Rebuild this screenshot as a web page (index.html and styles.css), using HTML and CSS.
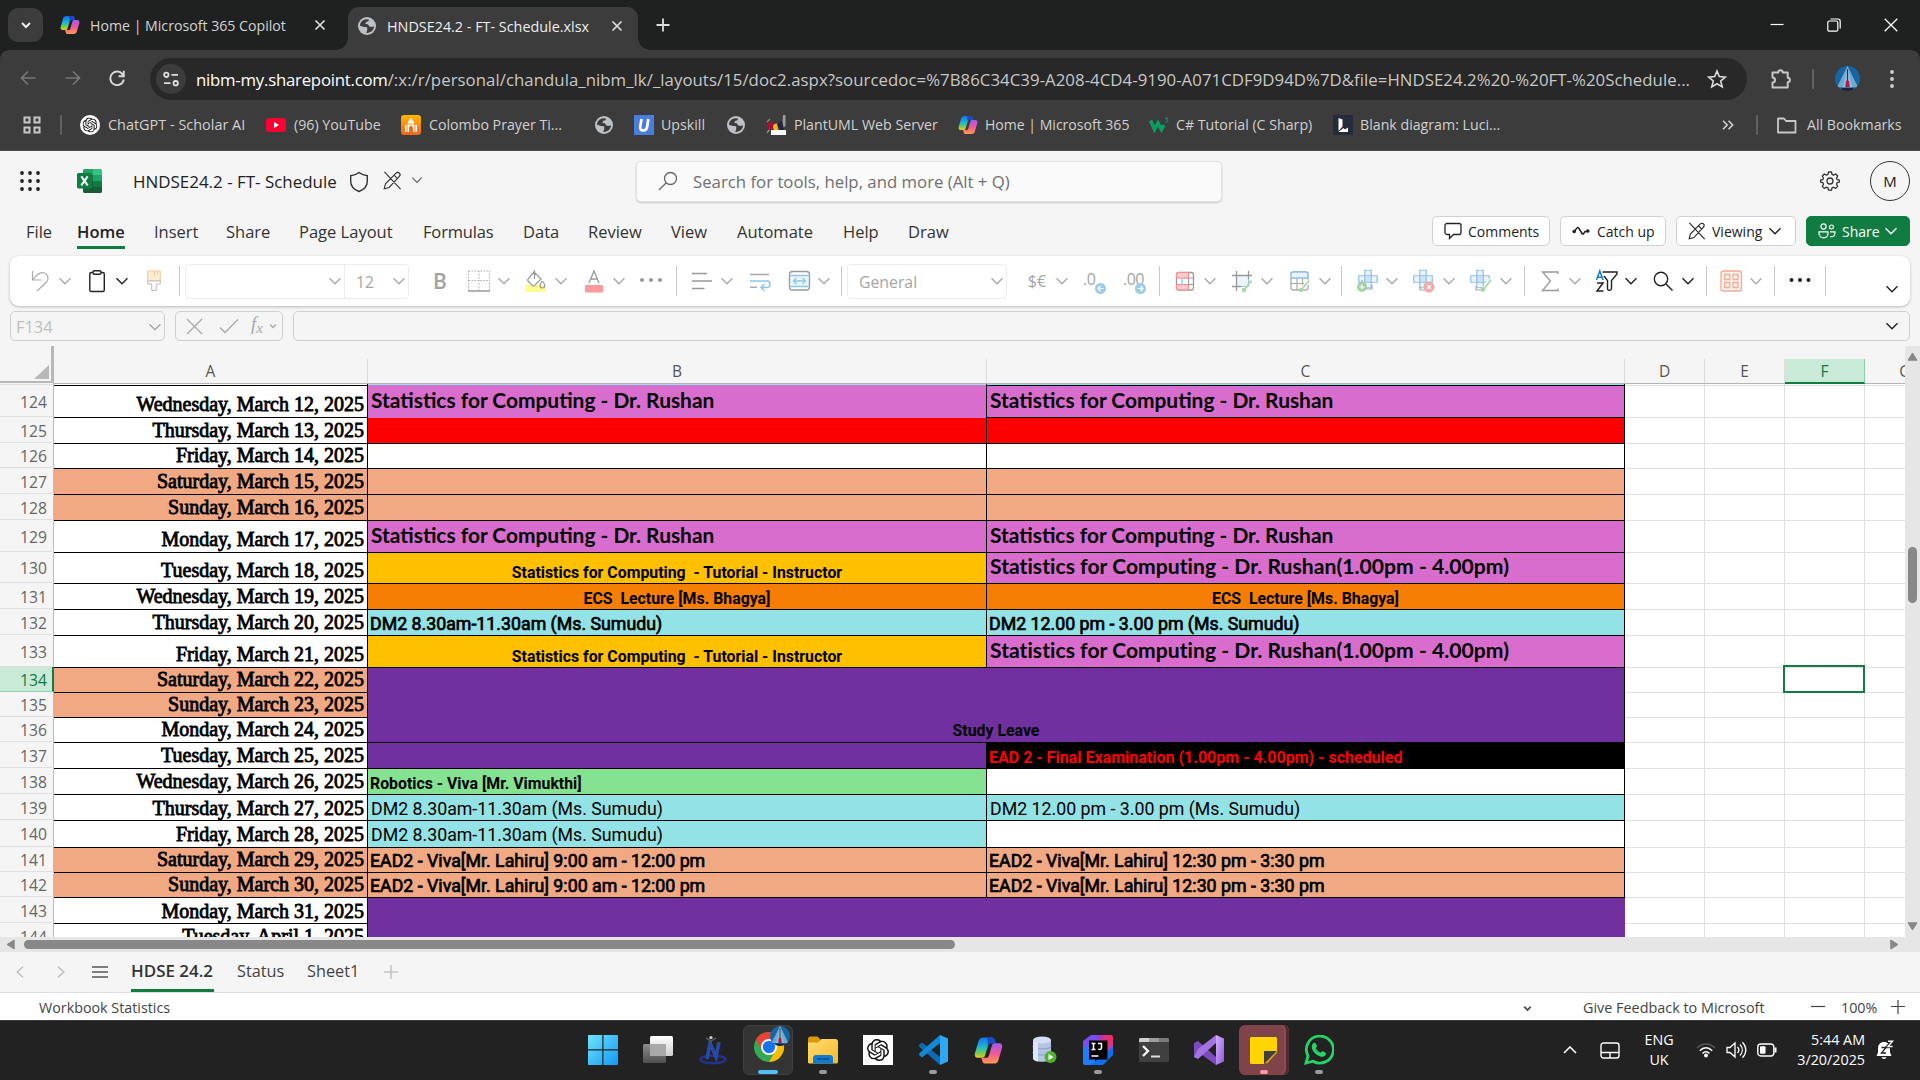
FILE: index.html
```html
<!DOCTYPE html>
<html lang="en">
<head>
<meta charset="utf-8">
<title>HNDSE24.2 - FT- Schedule.xlsx</title>
<link rel="stylesheet" href="styles.css">
</head>
<body>
<svg class="defs" width="0" height="0">
  <defs>
    <linearGradient id="gBlue" x1="0" y1="0" x2="0" y2="1"><stop offset="0" stop-color="#1a6fe8"/><stop offset=".45" stop-color="#19b4d8"/><stop offset=".75" stop-color="#6ccb5a"/><stop offset="1" stop-color="#f2c811"/></linearGradient>
    <linearGradient id="gPink" x1="0" y1="0" x2="0" y2="1"><stop offset="0" stop-color="#a05af0"/><stop offset=".5" stop-color="#f0569c"/><stop offset="1" stop-color="#ff9a4a"/></linearGradient>
    <linearGradient id="gWin" x1="0" y1="0" x2="1" y2="1"><stop offset="0" stop-color="#6fe3fb"/><stop offset="1" stop-color="#1299f5"/></linearGradient>
    <linearGradient id="gFold" x1="0" y1="0" x2="1" y2="1"><stop offset="0" stop-color="#ffde70"/><stop offset="1" stop-color="#f5b82e"/></linearGradient>
    <linearGradient id="gTaskA" x1="0" y1="0" x2="0" y2="1"><stop offset="0" stop-color="#fff"/><stop offset="1" stop-color="#cfcfcf"/></linearGradient>
    <linearGradient id="gTaskB" x1="0" y1="0" x2="0" y2="1"><stop offset="0" stop-color="#8c8c8c"/><stop offset="1" stop-color="#4f4f4f"/></linearGradient>
    <linearGradient id="gVs" x1="0" y1="0" x2="1" y2="1"><stop offset="0" stop-color="#d9b4fb"/><stop offset="1" stop-color="#8e55e0"/></linearGradient>
    <linearGradient id="gOrange" x1="0" y1="0" x2="0" y2="1"><stop offset="0" stop-color="#ffb900"/><stop offset="1" stop-color="#f0641e"/></linearGradient>
    <linearGradient id="gIj" x1="0" y1="0" x2="1" y2="1"><stop offset="0" stop-color="#8a3fe0"/><stop offset=".5" stop-color="#fe2857"/><stop offset="1" stop-color="#6b57ff"/></linearGradient>
  </defs>
  <symbol id="chev" viewBox="0 0 14 14"><path d="M1.5 4.2 7 9.8l5.500-5.600" fill="none" stroke="currentColor" stroke-width="1.400"/></symbol>
  <symbol id="x" viewBox="0 0 12 12"><path d="M1.500 1.500l9 9M10.500 1.500l-9 9" fill="none" stroke="currentColor" stroke-width="1.700"/></symbol>
  <symbol id="copilot" viewBox="0 0 20 20">
    <path d="M6.500 1h5.800c1 0 1.600.6 1.900 1.600L15 5H11.500c-1 0-1.500.4-1.800 1.500L7.600 13.500C7.200 14.800 6.500 15 5.500 15H2.800C.8 15 .2 13.600.7 11.700L3.300 3C3.700 1.700 4.900 1 6.500 1Z" fill="url(#gBlue)"/>
    <path d="M13.500 19H7.700c-1 0-1.600-.6-1.900-1.600L5 15h3.500c1 0 1.500-.4 1.800-1.500l2.100-7c.4-1.300 1.100-1.500 2.100-1.500h2.700c2 0 2.600 1.400 2.100 3.300L16.700 17c-.4 1.300-1.600 2-3.200 2Z" fill="url(#gPink)"/>
    <path d="M9 1h3.300c1 0 1.600.6 1.900 1.600L15 5h-3.500c-1 0-1.500.2-1.900 1.300z" fill="#1b49c9"/>
  </symbol>
  <symbol id="globe" viewBox="0 0 20 20"><circle cx="10" cy="10" r="9" fill="#bdc1c6"/><path d="M9.200 3.200C5.600 3.600 3 6.400 3 9.800l4 1.200 3.200.2v3l-1 2.700c4.400.4 7.800-2.900 7.800-6.600l-2.600.7-2-.4-1.600-2.300-2.600-.2 1.200-2.400 2.200-.4.2-1.700Z" fill="#3c3c3c"/></symbol>
  <symbol id="gpt" viewBox="0 0 24 24"><path fill="currentColor" d="M22.2819 9.8211a5.9847 5.9847 0 0 0-.5157-4.9108 6.0462 6.0462 0 0 0-6.5098-2.9A6.0651 6.0651 0 0 0 4.9807 4.1818a5.9847 5.9847 0 0 0-3.9977 2.9 6.0462 6.0462 0 0 0 .7427 7.0966 5.98 5.98 0 0 0 .511 4.9107 6.051 6.051 0 0 0 6.5146 2.9001A5.9847 5.9847 0 0 0 13.2599 24a6.0557 6.0557 0 0 0 5.7718-4.2058 5.9894 5.9894 0 0 0 3.9977-2.9001 6.0557 6.0557 0 0 0-.7475-7.0729zm-9.022 12.6081a4.4755 4.4755 0 0 1-2.8764-1.0408l.1419-.0804 4.7783-2.7582a.7948.7948 0 0 0 .3927-.6813v-6.7369l2.02 1.1686a.071.071 0 0 1 .038.052v5.5826a4.504 4.504 0 0 1-4.4945 4.4944zm-9.6607-4.1254a4.4708 4.4708 0 0 1-.5346-3.0137l.142.0852 4.783 2.7582a.7712.7712 0 0 0 .7806 0l5.8428-3.3685v2.3324a.0804.0804 0 0 1-.0332.0615L9.74 19.9502a4.4992 4.4992 0 0 1-6.1408-1.6464zM2.3408 7.8956a4.485 4.485 0 0 1 2.3655-1.9728V11.6a.7664.7664 0 0 0 .3879.6765l5.8144 3.3543-2.0201 1.1685a.0757.0757 0 0 1-.071 0l-4.8303-2.7865A4.504 4.504 0 0 1 2.3408 7.872zm16.5963 3.8558L13.1038 8.364 15.1192 7.2a.0757.0757 0 0 1 .071 0l4.8303 2.7913a4.4944 4.4944 0 0 1-.6765 8.1042v-5.6772a.79.79 0 0 0-.407-.667zm2.0107-3.0231l-.142-.0852-4.7735-2.7818a.7759.7759 0 0 0-.7854 0L9.409 9.2297V6.8974a.0662.0662 0 0 1 .0284-.0615l4.8303-2.7866a4.4992 4.4992 0 0 1 6.6802 4.66zM8.3065 12.863l-2.02-1.1638a.0804.0804 0 0 1-.038-.0567V6.0742a4.4992 4.4992 0 0 1 7.3757-3.4537l-.142.0805L8.704 5.459a.7948.7948 0 0 0-.3927.6813zm1.0976-2.3654l2.602-1.4998 2.6069 1.4998v2.9994l-2.5974 1.4997-2.6067-1.4997Z"/></symbol>
  <symbol id="noedit" viewBox="0 0 20 20"><g fill="none" stroke="currentColor" stroke-width="1.200"><path d="M1.500 1l17 18M1.300 18.700l1.300-5.300L13.700 2.200c1-1 2.600-1 3.500 0s1 2.500 0 3.500L6.500 17.300zM11.600 4.300l3.700 3.700"/></g></symbol>
  <symbol id="avatar" viewBox="0 0 26 26"><clipPath id="avc"><circle cx="13" cy="13" r="13"/></clipPath><g clip-path="url(#avc)"><rect width="26" height="26" fill="#1765a3"/><path d="M13 0L2 22h22z" fill="#6fa9cf"/><path d="M13 0L8 22h10z" fill="#8fbcd8"/><path d="M7 23h12v4H7z" fill="#16253c"/><path d="M13 3v13" stroke="#333" stroke-width="1.200"/><path d="M11.500 15l1.500 1 1.500-1 .8 7h-4.600z" fill="#b3174d"/></g></symbol>
  <symbol id="cross" viewBox="0 0 26 26"><path d="M9.500 3.500h7v6h6.500v7h-6.500v6h-7v-6H3v-7h6.500z" fill="#eaf4fb" stroke="#8fc0e6" stroke-width="1.300"/><path d="M9.500 9.500h7v7h-7z" fill="#cfe5f5" stroke="#8fc0e6" stroke-width="1.300"/></symbol>
</svg>

<div class="screen">
  <header class="tabstrip">
    <div class="tabsearch"><svg width="12" height="12" viewBox="0 0 12 12"><path d="M2 4l4 4 4-4" fill="none" stroke="#eee" stroke-width="2"/></svg></div>
    <div class="tab tab-idle">
      <svg width="20" height="20"><use href="#copilot"/></svg><span class="tabtitle">Home | Microsoft 365 Copilot</span>
      <svg class="tabx" width="12" height="12"><use href="#x"/></svg>
    </div>
    <div class="tab tab-active">
      <svg width="20" height="20"><use href="#globe"/></svg><span class="tabtitle sel">HNDSE24.2 - FT- Schedule.xlsx</span>
      <svg class="tabx" width="12" height="12"><use href="#x"/></svg>
    </div>
    <svg class="newtab" width="14" height="14" viewBox="0 0 14 14"><path d="M7 .5v13M.5 7h13" stroke="#ddd" stroke-width="1.800"/></svg>
    <div class="winctl">
      <svg width="14" height="14" viewBox="0 0 14 14"><path d="M.5 6.500h13" stroke="#fff" stroke-width="1.200"/></svg>
      <svg width="14" height="14" viewBox="0 0 14 14"><g fill="none" stroke="#fff" stroke-width="1.200"><rect x=".8" y="3" width="10" height="10.200" rx="1.500"/><path d="M3.500 1h7.500c1.300 0 2.200.9 2.200 2.200V10.500"/></g></svg>
      <svg width="14" height="14" viewBox="0 0 14 14"><path d="M.7.7l12.600 12.600M13.300.7.7 13.300" stroke="#fff" stroke-width="1.300"/></svg>
    </div>
  </header>

  <div class="toolbar">
    <svg class="nav dim" width="16" height="16" viewBox="0 0 16 16"><path d="M15.500 8H1.500M8 1.500 1.500 8 8 14.500" fill="none" stroke="currentColor" stroke-width="1.700"/></svg>
    <svg class="nav dim" width="16" height="16" viewBox="0 0 16 16"><path d="M.5 8h14M8 1.500 14.500 8 8 14.500" fill="none" stroke="currentColor" stroke-width="1.700"/></svg>
    <svg class="nav" width="16" height="16" viewBox="0 0 16 16"><path d="M14.300 5.500A6.800 6.800 0 1 0 14.800 9.500M14.800.8v5.400H9.500" fill="none" stroke="currentColor" stroke-width="1.900"/></svg>
    <div class="omnibox">
      <span class="siteinfo"><svg width="16" height="16" viewBox="0 0 16 16"><g fill="none" stroke="#ddd" stroke-width="1.800"><circle cx="3.300" cy="3.800" r="2.200"/><path d="M8.500 3.800H15M1 12.200h6.500"/><circle cx="12.700" cy="12.200" r="2.200"/></g></svg></span>
      <span class="url"><b>nibm-my.sharepoint.com</b>/:x:/r/personal/chandula_nibm_lk/_layouts/15/doc2.aspx?sourcedoc=%7B86C34C39-A208-4CD4-9190-A071CDF9D94D%7D&amp;file=HNDSE24.2%20-%20FT-%20Schedule...</span>
      <svg class="star" width="20" height="20" viewBox="0 0 20 20"><path d="M10 2l2.300 5.600 6 .5-4.600 3.900 1.500 5.900L10 14.700l-5.200 3.200 1.500-5.900L1.700 8.100l6-.5z" fill="none" stroke="#ddd" stroke-width="1.600"/></svg>
    </div>
    <svg class="ext" width="22" height="22" viewBox="0 0 22 22"><path d="M2.500 4.500h5.800a2.200 2.200 0 1 1 4.400 0h5v5.300a2.200 2.200 0 1 1 0 4.400v5.300H2.500v-5a2.500 2.500 0 1 0 0-5z" fill="none" stroke="#c7c7c7" stroke-width="2" stroke-linejoin="round"/></svg>
    <i class="vbar"></i>
    <svg class="ava" width="25" height="25"><use href="#avatar"/></svg>
    <svg class="dots" width="4" height="18" viewBox="0 0 4 18"><g fill="#d0d0d0"><circle cx="2" cy="2" r="1.900"/><circle cx="2" cy="9" r="1.900"/><circle cx="2" cy="16" r="1.900"/></g></svg>
  </div>

  <nav class="bookmarks">
    <svg class="apps" width="18" height="18" viewBox="0 0 18 18"><g fill="none" stroke="#c7c7c7" stroke-width="2"><path d="M1.500 1.500h5v5h-5zM11.500 1.500h5v5h-5zM1.500 11.500h5v5h-5zM11.500 11.500h5v5h-5z"/></g></svg>
    <i class="vbar"></i>
    <span class="bm bm1"><svg class="gpt" width="20" height="20" viewBox="0 0 20 20"><circle cx="10" cy="10" r="10" fill="#fff"/><use href="#gpt" x="2.500" y="2.500" width="15" height="15"/></svg>ChatGPT - Scholar AI</span>
    <span class="bm bm2"><svg width="20" height="20" viewBox="0 0 20 20"><rect y="3" width="20" height="14" rx="3.500" fill="#ff0033"/><path d="M8 7v6l5-3z" fill="#fff"/></svg>(96) YouTube</span>
    <span class="bm bm3"><svg width="20" height="20" viewBox="0 0 20 20"><rect width="20" height="20" rx="3" fill="url(#gOrange)"/><path d="M10 3c1 2 3 2.500 3.500 5.500h-7C7 5.500 9 5 10 3ZM4 10h1.500v7H4zM14.500 10H16v7h-1.500zM6.500 9.500h7V17h-7z" fill="#fff"/><path d="M8 17v-4c0-1.200 1-2 2-2.500 1 .5 2 1.300 2 2.500v4z" fill="#ef6b1f"/></svg>Colombo Prayer Ti...</span>
    <span class="bm bm4"><svg width="20" height="20"><use href="#globe"/></svg></span>
    <span class="bm bm5"><svg width="20" height="20" viewBox="0 0 20 20"><rect width="20" height="20" fill="#4a7de0"/><path d="M7.500 4 6.300 11c-.5 3 .6 4.500 3 4.500s3.600-1.500 4-4.500l1-7" fill="none" stroke="#fff" stroke-width="2.700"/></svg>Upskill</span>
    <span class="bm bm6"><svg width="20" height="20"><use href="#globe"/></svg></span>
    <span class="bm bm7"><svg width="20" height="20" viewBox="0 0 20 20"><path d="M1 7 4 4M1 18l3-4" stroke="#888" stroke-width="1.500"/><circle cx="5" cy="11" r="4" fill="#a3122f"/><circle cx="10.500" cy="12" r="3.500" fill="#f0b429"/><path d="M17 0h2.500v11L16 14z" fill="#9a9a9a"/><path d="M11 9l5-3 2 8-5 2z" fill="#23263f"/><path d="M5 15h15v5H5z" fill="#fff"/></svg>PlantUML Web Server</span>
    <span class="bm bm8"><svg width="20" height="20"><use href="#copilot"/></svg>Home | Microsoft 365</span>
    <span class="bm bm9"><svg width="20" height="20" viewBox="0 0 20 20"><path d="M1.500 5.500l4 9L9 8l3.500 6.500L15 10" fill="none" stroke="#0b9d63" stroke-width="3.600"/><path d="M16 3h3l-1.700 2c1.300 0 1.700.8 1.500 1.600-.3.900-1.800 1-2.800.4" fill="none" stroke="#0b9d63" stroke-width="1"/></svg>C# Tutorial (C Sharp)</span>
    <span class="bm bm10"><svg width="20" height="20" viewBox="0 0 20 20"><rect width="20" height="20" fill="#252b3a"/><path d="M5.500 3l4 1.500v7L5.500 16zM5.500 17l5-4 1.500 1.500 3-2V17z" fill="#fff"/></svg>Blank diagram: Luci...</span>
    <svg class="more" width="12" height="10" viewBox="0 0 12 10"><path d="M1 .8 5.200 5 1 9.200M6.500.8 10.700 5 6.500 9.200" fill="none" stroke="#d0d0d0" stroke-width="1.600"/></svg>
    <i class="vbar vb2"></i>
    <span class="bm bmall"><svg width="22" height="20" viewBox="0 0 22 20"><path d="M2 3.500h6l2 2.500h9.500v11.500H2z" fill="none" stroke="#c7c7c7" stroke-width="1.800" stroke-linejoin="round"/></svg>All Bookmarks</span>
  </nav>

  <section class="titlebar">
    <svg class="waffle" width="20" height="20" viewBox="0 0 20 20"><g fill="#222"><circle cx="2" cy="2" r="1.900"/><circle cx="10" cy="2" r="1.900"/><circle cx="18" cy="2" r="1.900"/><circle cx="2" cy="10" r="1.900"/><circle cx="10" cy="10" r="1.900"/><circle cx="18" cy="10" r="1.900"/><circle cx="2" cy="18" r="1.900"/><circle cx="10" cy="18" r="1.900"/><circle cx="18" cy="18" r="1.900"/></g></svg>
    <svg class="xl" width="25" height="24" viewBox="0 0 25 24"><path d="M6 1.500C6 .7 6.700 0 7.500 0H16v6H6z" fill="#21a366"/><path d="M16 0h7.500c.8 0 1.500.7 1.500 1.500V6h-9z" fill="#33c481"/><path d="M6 6h10v6H6z" fill="#107c41"/><path d="M16 6h9v6h-9z" fill="#21a366"/><path d="M6 12h10v6H6z" fill="#185c37"/><path d="M16 12h9v6h-9z" fill="#107c41"/><path d="M6 18h19v4.500c0 .8-.7 1.500-1.500 1.500h-16C6.700 24 6 23.300 6 22.500z" fill="#185c37"/><rect y="4" width="15" height="15.500" rx="1.500" fill="#107c41"/><path d="M4.300 7.300l6.400 9M10.700 7.300l-6.400 9" stroke="#fff" stroke-width="2"/></svg>
    <span class="docname">HNDSE24.2 - FT- Schedule</span>
    <svg class="shield" width="20" height="22" viewBox="0 0 20 22"><path d="M10 1.500c2.500 2 5 3 8.300 3.200v5.500c0 4.800-3 8.300-8.300 10.300C4.700 18.500 1.700 15 1.700 10.200V4.700C5 4.500 7.500 3.500 10 1.500Z" fill="none" stroke="#333" stroke-width="1.400"/></svg>
    <svg class="ned" width="19" height="19"><use href="#noedit"/></svg>
    <svg class="tchev" width="12" height="12"><use href="#chev"/></svg>
    <div class="search"><svg width="20" height="20" viewBox="0 0 20 20"><g fill="none" stroke="#666" stroke-width="1.300"><circle cx="12.500" cy="7.500" r="6"/><path d="M8.300 11.800 1 19"/></g></svg>Search for tools, help, and more (Alt + Q)</div>
    <svg class="gear" width="20" height="20" viewBox="0 0 20 20"><g fill="none" stroke="#333" stroke-width="1.300"><circle cx="10" cy="10" r="3"/><path d="M8.500 1h3l.5 2.400 1.500.7L15.700 3l2 2-1.200 2.300.6 1.300 2.200.4v2.200l-2.200.5-.6 1.500 1.200 2.200-2 2-2.200-1.200-1.500.6-.5 2.300h-3L8 16.800l-1.500-.6-2.200 1.200-2-2 1.200-2.200-.6-1.500L.7 11.200V9l2.200-.4.6-1.300L2.300 5l2-2 2.200 1.100L8 3.400z" stroke-linejoin="round"/></g></svg>
    <span class="me">M</span>
  </section>

  <section class="menubar">
    <span class="mi m1">File</span><span class="mi m2 on">Home</span><span class="mi m3">Insert</span><span class="mi m4">Share</span><span class="mi m5">Page Layout</span><span class="mi m6">Formulas</span><span class="mi m7">Data</span><span class="mi m8">Review</span><span class="mi m9">View</span><span class="mi m10">Automate</span><span class="mi m11">Help</span><span class="mi m12">Draw</span>
    <div class="actions">
      <span class="btn b1"><svg width="18" height="18" viewBox="0 0 18 18"><path d="M3 1.500h12a2 2 0 0 1 2 2v7a2 2 0 0 1-2 2H9.500l-4 4v-4H3a2 2 0 0 1-2-2v-7a2 2 0 0 1 2-2Z" fill="none" stroke="#222" stroke-width="1.300"/></svg>Comments</span>
      <span class="btn b2"><svg width="18" height="18" viewBox="0 0 18 18"><circle cx="2.200" cy="9.500" r="1.800" fill="#222"/><circle cx="15.800" cy="9" r="1.800" fill="#222"/><path d="M2 9.500l3-3.500c.8-.8 1.500-.4 2 .5l3 5c.5.8 1.200.8 1.700 0L13 9.500h3" fill="none" stroke="#222" stroke-width="1.500"/></svg>Catch up</span>
      <span class="btn b3"><svg width="18" height="18"><use href="#noedit"/></svg>Viewing<svg class="bc" width="14" height="14"><use href="#chev"/></svg></span>
      <span class="btn b4"><svg width="18" height="18" viewBox="0 0 18 18"><g fill="none" stroke="#fff" stroke-width="1.200"><circle cx="5.500" cy="4.500" r="2.600"/><circle cx="13.500" cy="5" r="2"/><path d="M1 9.800h9v1.500c0 6-9 6-9 0zM12 9.800h5c.3 4-1.500 5.200-4.700 4.800"/></g></svg>Share<svg class="bc" width="14" height="14"><use href="#chev"/></svg></span>
    </div>
  </section>

  <section class="ribbon">
    <svg class="t g t0" viewBox="0 0 32 32"><path d="M8.500 7v9h9M9 15.500C13 10 17 7.500 20.500 9c4 1.800 4.500 6 2 9L13 27" fill="none" stroke="currentColor" stroke-width="1.200" transform="translate(0 -1)"/></svg><svg class="c g" viewBox="0 0 14 14"><use href="#chev"/></svg>
    <svg class="t k" viewBox="0 0 32 32"><g fill="none" stroke="currentColor" stroke-width="1.400"><rect x="8.800" y="7.500" width="14.500" height="19" rx="1.500"/><rect x="12" y="5.700" width="8" height="3.600" rx="1.500" fill="#fff"/></g></svg><svg class="c k" viewBox="0 0 14 14"><use href="#chev"/></svg>
    <svg class="t g" viewBox="0 0 32 32"><path d="M9.700 6h12.600v10H9.700z" fill="#fdecd3" stroke="#f3c796"/><path d="M16.500 6v5M19.500 6v3" stroke="#f3c796"/><path d="M9.700 16h12.600v3h-4v6.500h-4.600V19h-4z" fill="#fff" stroke="#bbb"/></svg>
    <i class="dv"></i>
    <span class="combo font"><svg class="c g" viewBox="0 0 14 14"><use href="#chev"/></svg></span><span class="combo size"><em>12</em><svg class="c g" viewBox="0 0 14 14"><use href="#chev"/></svg></span>
    <span class="t bold">B</span>
    <svg class="t g" viewBox="0 0 32 32"><path d="M5.500 6h21M5.500 15.500h21M5.500 6v19M16 6v19M26.500 6v19" stroke="currentColor" stroke-dasharray="1.500 1.500"/><path d="M5 26h22" stroke="#999" stroke-width="1.500"/></svg><svg class="c g" viewBox="0 0 14 14"><use href="#chev"/></svg>
    <svg class="t g" viewBox="0 0 32 32"><path d="M6 20.500c3-1.500 5 1 8 0s9-1 12 0V26c0 .6-.5 1-1 1H7c-.5 0-1-.4-1-1z" fill="#fffb8f"/><path d="M14 7l7 7-6.500 6.500c-.7.600-1.500.600-2 0L8 16c-.5-.5-.5-1.300 0-2zM14.500 5v9M22.500 16c3.500 4.500 2.500 7-.2 7s-3.300-3-.1-7" fill="none" stroke="#999" stroke-width="1.200"/></svg><svg class="c g" viewBox="0 0 14 14"><use href="#chev"/></svg>
    <svg class="t g t8" viewBox="0 0 32 32"><rect x="7" y="20" width="18" height="7.500" rx="1" fill="#ff9a9a"/><path d="M11 18l5-12 5 12M12.700 14h6.600" fill="none" stroke="#999" stroke-width="1.300"/></svg><svg class="c g" viewBox="0 0 14 14"><use href="#chev"/></svg>
    <svg class="t g" viewBox="0 0 32 32"><g fill="#999"><circle cx="7" cy="15" r="2"/><circle cx="16" cy="15" r="2"/><circle cx="25" cy="15" r="2"/></g></svg>
    <i class="dv"></i>
    <svg class="t g" viewBox="0 0 32 32"><path d="M6 8.500h15M6 16h20M6 23.500h12.500" stroke="#999" stroke-width="1.400"/></svg><svg class="c g" viewBox="0 0 14 14"><use href="#chev"/></svg>
    <svg class="t g t8" viewBox="0 0 32 32"><path d="M6 9.500h19M6 22.300h7" stroke="#aaa" stroke-width="1.500"/><path d="M6 16h17c4 0 4 6.500 0 6.500h-5.500M20.500 19l-3.500 3.500 3.500 3.500" fill="none" stroke="#8fc6ec" stroke-width="1.500"/></svg>
    <svg class="t g" viewBox="0 0 32 32"><path d="M6.500 10h20v12h-20z" fill="#eaf5fc"/><rect x="6.500" y="6.500" width="20" height="18.500" rx="3" fill="none" stroke="#999" stroke-width="1.300"/><path d="M6.500 10.500h20M6.500 21.500h20M11 16h10.500M13.500 13l-3 3 3 3M19.500 13l3 3-3 3" fill="none" stroke="#8fc6ec" stroke-width="1.300"/></svg><svg class="c g" viewBox="0 0 14 14"><use href="#chev"/></svg>
    <i class="dv d8"></i>
    <span class="combo num"><em>General</em><svg class="c g" viewBox="0 0 14 14"><use href="#chev"/></svg></span>
    <span class="t cur">$€</span><svg class="c g" viewBox="0 0 14 14"><use href="#chev"/></svg>
    <span class="t dec t8">.0<svg width="11" height="11" viewBox="0 0 11 11"><circle cx="5.500" cy="5.500" r="5.500" fill="#9cccea"/><path d="M8.500 5.500h-5M5.500 3 3 5.500 5.500 8" fill="none" stroke="#fff" stroke-width="1.200"/></svg></span>
    <span class="t dec dec2 t8">.00<svg width="11" height="11" viewBox="0 0 11 11"><circle cx="5.500" cy="5.500" r="5.500" fill="#9cccea"/><path d="M2.500 5.500h5M5.500 3 8 5.500 5.500 8" fill="none" stroke="#fff" stroke-width="1.200"/></svg></span>
    <i class="dv d8"></i>
    <svg class="t g t0b" viewBox="0 0 32 32"><rect x="7.500" y="7.500" width="17" height="17.500" rx="2.500" fill="#fff" stroke="#999" stroke-width="1.300"/><path d="M19.500 7.500V25M14 13h10.500M7.500 19.500h17" stroke="#999"/><path d="M10 7.500h9.500V13H7.500v-3c0-1.500 1-2.500 2.500-2.500ZM7.500 19.500h12V25H10c-1.500 0-2.500-1-2.500-2.500z" fill="#fbcaca" stroke="#f08f8f" stroke-width="1.200"/><path d="M13 13v6.500" stroke="#8fc6ec" stroke-width="1.300"/></svg><svg class="c g" viewBox="0 0 14 14"><use href="#chev"/></svg>
    <svg class="t g" viewBox="0 0 32 32"><path d="M10.500 10.500h12v11h-12z" fill="#eaf5fc" stroke="#8fc6ec"/><path d="M6 10.500h20M6 21.500h9M10.500 6v20M22.500 6v8" stroke="#999" stroke-width="1.300"/><path d="M25.500 15.500l-6 8" stroke="#a9d5a9" stroke-width="1.800"/><circle cx="18" cy="25" r="2.200" fill="#a5d8a5"/></svg><svg class="c g" viewBox="0 0 14 14"><use href="#chev"/></svg>
    <svg class="t g t8" viewBox="0 0 32 32"><rect x="7" y="7" width="17" height="18" rx="2.500" fill="none" stroke="#aaa" stroke-width="1.300"/><path d="M7 18.500h17M13 13v12M18.500 13v8" stroke="#aaa" stroke-width="1.200"/><path d="M7 13V9.500C7 8 8 7 9.500 7h12C23 7 24 8 24 9.500V13z" fill="#eaf5fc" stroke="#8fc0e6" stroke-width="1.300"/><path d="M25 15.500l-6.500 8" stroke="#fff" stroke-width="4"/><path d="M25 15.500l-6.500 8" stroke="#a9d5a9" stroke-width="1.800"/><circle cx="17" cy="25" r="2.200" fill="#a5d8a5"/></svg><svg class="c g" viewBox="0 0 14 14"><use href="#chev"/></svg>
    <i class="dv d7"></i>
    <svg class="t g" viewBox="0 0 32 32"><use href="#cross" x="5" y="2" width="24" height="24"/><path d="M11 15v9h10v-4" fill="none" stroke="#aaa" stroke-width="1.200"/><circle cx="11" cy="22" r="5" fill="#a5cfa5"/><path d="M8.500 22h5M11 19.500v5" stroke="#fff" stroke-width="1.200"/></svg><svg class="c g" viewBox="0 0 14 14"><use href="#chev"/></svg>
    <svg class="t g" viewBox="0 0 32 32"><use href="#cross" x="3" y="2" width="24" height="24"/><path d="M12 21v4h7" fill="none" stroke="#aaa" stroke-width="1.200"/><circle cx="21" cy="22" r="5.500" fill="#f4a9a9"/><path d="M19 20l4 4M23 20l-4 4" stroke="#fff" stroke-width="1.200"/></svg><svg class="c g" viewBox="0 0 14 14"><use href="#chev"/></svg>
    <svg class="t g" viewBox="0 0 32 32"><use href="#cross" x="3" y="2" width="24" height="24"/><path d="M11 21v4h6" fill="none" stroke="#aaa" stroke-width="1.200"/><path d="M26 14.500l-6.500 9" stroke="#fff" stroke-width="4"/><path d="M26 14.500l-6.500 9" stroke="#a9d5a9" stroke-width="1.800"/><circle cx="18" cy="24.500" r="2.200" fill="#a5d8a5"/></svg><svg class="c g" viewBox="0 0 14 14"><use href="#chev"/></svg>
    <i class="dv"></i>
    <svg class="t g" viewBox="0 0 32 32"><path d="M24 9V7H8.500l8 9-8 9.500H24v-2" fill="none" stroke="#999" stroke-width="1.300"/></svg><svg class="c g" viewBox="0 0 14 14"><use href="#chev"/></svg>
    <svg class="t k t6" viewBox="0 0 32 32"><path d="M6.500 15l3.300-9 3.300 9M7.800 12.200h4" fill="none" stroke="#1a78c8" stroke-width="1.500"/><path d="M7 18h6l-6 8h6.500" fill="none" stroke="#222" stroke-width="1.500"/><path d="M12.500 7H27v2l-5.500 6.500v8c0 2-4 3-4 0v-8L14 11" fill="none" stroke="#222" stroke-width="1.400"/></svg><svg class="c k" viewBox="0 0 14 14"><use href="#chev"/></svg>
    <svg class="t k" viewBox="0 0 32 32"><g fill="none" stroke="#222" stroke-width="1.400"><circle cx="14" cy="14" r="6.700"/><path d="M19 19l6.500 6.500"/></g></svg><svg class="c k" viewBox="0 0 14 14"><use href="#chev"/></svg>
    <i class="dv"></i>
    <svg class="t t8b" viewBox="0 0 32 32"><g fill="none" stroke="#f2ac93" stroke-width="1.300"><rect x="6" y="6" width="20.500" height="20" rx="2.500" fill="#fdf3ef"/><path d="M9.700 9.500h5v5h-5zM18 9.500h5v5h-5zM9.700 17.500h5v5h-5zM18 17.500h5v5h-5z"/></g></svg><svg class="c g" viewBox="0 0 14 14"><use href="#chev"/></svg>
    <i class="dv"></i>
    <svg class="t" viewBox="0 0 32 32"><g fill="#222"><circle cx="7.500" cy="15" r="2"/><circle cx="16" cy="15" r="2"/><circle cx="24.500" cy="15" r="2"/></g></svg>
    <i class="dv"></i>
    <svg class="c k rc" viewBox="0 0 14 14"><use href="#chev"/></svg>
  </section>

  <section class="formula">
    <span class="fb name">F134<svg class="c" viewBox="0 0 14 14"><use href="#chev"/></svg></span>
    <span class="fb fx"><svg width="17" height="17" viewBox="0 0 17 17"><path d="M1 1l15 15M16 1 1 16" stroke="#aaa" stroke-width="1.300"/></svg><svg width="20" height="17" viewBox="0 0 20 17"><path d="M1 9.500 6 14.500 19 1.500" fill="none" stroke="#aaa" stroke-width="1.300"/></svg><em>f<sub>x</sub></em><svg class="sc" width="8" height="8" viewBox="0 0 8 8"><path d="M1 2.500l3 3 3-3" fill="none" stroke="#aaa" stroke-width="1.500"/></svg></span>
    <span class="fb input"><svg class="c k" viewBox="0 0 14 14"><use href="#chev"/></svg></span>
  </section>

  <section class="work">
    <div class="grid">
      <div class="colhead"><div class="corner"><svg width="15" height="14" viewBox="0 0 15 14"><path d="M15 0v14H0z" fill="#b8b8b8"/></svg></div><span class="wa">A</span><span class="wb">B</span><span class="wc">C</span><span class="wd">D</span><span class="wd">E</span><span class="wd hsel">F</span><span class="wg">G</span></div>
      <div class="row h2"><i class="rh"></i><i class="wa"></i><i class="wb sliver"></i><i class="wc cyan"></i><i class="e wd"></i><i class="e wd"></i><i class="e wd"></i><i class="e wg"></i></div>
      <div class="row h32"><i class="rh">124</i><i class="wa">Wednesday, March 12, 2025</i><i class="wb pink lato nb">Statistics for Computing - Dr. Rushan</i><i class="wc pink lato">Statistics for Computing - Dr. Rushan</i><i class="e wd"></i><i class="e wd"></i><i class="e wd"></i><i class="e wg"></i></div>
      <div class="row h26"><i class="rh">125</i><i class="wa">Thursday, March 13, 2025</i><i class="wb red"></i><i class="wc red"></i><i class="e wd"></i><i class="e wd"></i><i class="e wd"></i><i class="e wg"></i></div>
      <div class="row h25"><i class="rh">126</i><i class="wa">Friday, March 14, 2025</i><i class="wb"></i><i class="wc"></i><i class="e wd"></i><i class="e wd"></i><i class="e wd"></i><i class="e wg"></i></div>
      <div class="row h26"><i class="rh">127</i><i class="wa peach">Saturday, March 15, 2025</i><i class="wb peach"></i><i class="wc peach"></i><i class="e wd"></i><i class="e wd"></i><i class="e wd"></i><i class="e wg"></i></div>
      <div class="row h26"><i class="rh">128</i><i class="wa peach">Sunday, March 16, 2025</i><i class="wb peach"></i><i class="wc peach"></i><i class="e wd"></i><i class="e wd"></i><i class="e wd"></i><i class="e wg"></i></div>
      <div class="row h32"><i class="rh">129</i><i class="wa">Monday, March 17, 2025</i><i class="wb pink lato">Statistics for Computing - Dr. Rushan</i><i class="wc pink lato">Statistics for Computing - Dr. Rushan</i><i class="e wd"></i><i class="e wd"></i><i class="e wd"></i><i class="e wg"></i></div>
      <div class="row h31"><i class="rh">130</i><i class="wa">Tuesday, March 18, 2025</i><i class="wb gold small mid">Statistics for Computing &nbsp;- Tutorial - Instructor</i><i class="wc pink lato long">Statistics for Computing - Dr. Rushan(1.00pm - 4.00pm)</i><i class="e wd"></i><i class="e wd"></i><i class="e wd"></i><i class="e wg"></i></div>
      <div class="row h26"><i class="rh">131</i><i class="wa">Wednesday, March 19, 2025</i><i class="wb orange small mid">ECS &nbsp;Lecture [Ms. Bhagya]</i><i class="wc orange small mid">ECS &nbsp;Lecture [Ms. Bhagya]</i><i class="e wd"></i><i class="e wd"></i><i class="e wd"></i><i class="e wg"></i></div>
      <div class="row h26"><i class="rh">132</i><i class="wa">Thursday, March 20, 2025</i><i class="wb cyan large">DM2 8.30am-11.30am (Ms. Sumudu)</i><i class="wc cyan large">DM2 12.00 pm - 3.00 pm (Ms. Sumudu)</i><i class="e wd"></i><i class="e wd"></i><i class="e wd"></i><i class="e wg"></i></div>
      <div class="row h32"><i class="rh">133</i><i class="wa">Friday, March 21, 2025</i><i class="wb gold small mid">Statistics for Computing &nbsp;- Tutorial - Instructor</i><i class="wc pink lato long">Statistics for Computing - Dr. Rushan(1.00pm - 4.00pm)</i><i class="e wd"></i><i class="e wd"></i><i class="e wd"></i><i class="e wg"></i></div>
      <div class="row h25"><i class="rh rsel">134</i><i class="wa peach">Saturday, March 22, 2025</i><i class="wbc purple nb"></i><i class="e wd"></i><i class="e wd"></i><i class="e wd active"></i><i class="e wg"></i></div>
      <div class="row h25"><i class="rh">135</i><i class="wa peach">Sunday, March 23, 2025</i><i class="wbc purple nb"></i><i class="e wd"></i><i class="e wd"></i><i class="e wd"></i><i class="e wg"></i></div>
      <div class="row h25"><i class="rh">136</i><i class="wa">Monday, March 24, 2025</i><i class="wbc purple small mid up">Study Leave</i><i class="e wd"></i><i class="e wd"></i><i class="e wd"></i><i class="e wg"></i></div>
      <div class="row h26"><i class="rh">137</i><i class="wa">Tuesday, March 25, 2025</i><i class="wb purple"></i><i class="wc exam small">EAD 2 - Final Examination (1.00pm - 4.00pm) - scheduled</i><i class="e wd"></i><i class="e wd"></i><i class="e wd"></i><i class="e wg"></i></div>
      <div class="row h26"><i class="rh">138</i><i class="wa">Wednesday, March 26, 2025</i><i class="wb green small">Robotics - Viva [Mr. Vimukthi]</i><i class="wc"></i><i class="e wd"></i><i class="e wd"></i><i class="e wd"></i><i class="e wg"></i></div>
      <div class="row h26"><i class="rh">139</i><i class="wa low">Thursday, March 27, 2025</i><i class="wb cyan plain">DM2 8.30am-11.30am (Ms. Sumudu)</i><i class="wc cyan plain">DM2 12.00 pm - 3.00 pm (Ms. Sumudu)</i><i class="e wd"></i><i class="e wd"></i><i class="e wd"></i><i class="e wg"></i></div>
      <div class="row h27"><i class="rh">140</i><i class="wa">Friday, March 28, 2025</i><i class="wb cyan plain">DM2 8.30am-11.30am (Ms. Sumudu)</i><i class="wc"></i><i class="e wd"></i><i class="e wd"></i><i class="e wd"></i><i class="e wg"></i></div>
      <div class="row h25"><i class="rh">141</i><i class="wa peach">Saturday, March 29, 2025</i><i class="wb peach large">EAD2 - Viva[Mr. Lahiru] 9:00 am - 12:00 pm</i><i class="wc peach large">EAD2 - Viva[Mr. Lahiru] 12:30 pm - 3:30 pm</i><i class="e wd"></i><i class="e wd"></i><i class="e wd"></i><i class="e wg"></i></div>
      <div class="row h25"><i class="rh">142</i><i class="wa peach">Sunday, March 30, 2025</i><i class="wb peach large">EAD2 - Viva[Mr. Lahiru] 9:00 am - 12:00 pm</i><i class="wc peach large">EAD2 - Viva[Mr. Lahiru] 12:30 pm - 3:30 pm</i><i class="e wd"></i><i class="e wd"></i><i class="e wd"></i><i class="e wg"></i></div>
      <div class="row h26"><i class="rh">143</i><i class="wa low">Monday, March 31, 2025</i><i class="wbc purple nb nr"></i><i class="e wd"></i><i class="e wd"></i><i class="e wd"></i><i class="e wg"></i></div>
      <div class="row h26"><i class="rh">144</i><i class="wa">Tuesday, April 1, 2025</i><i class="wbc purple nb nr"></i><i class="e wd"></i><i class="e wd"></i><i class="e wd"></i><i class="e wg"></i></div>
    </div>
    <div class="vscroll"><svg width="11" height="9" viewBox="0 0 11 9"><path d="M5.500 1 10 8.200H1z" fill="#888" stroke="#888" stroke-linejoin="round"/></svg><i></i><svg class="dn" width="11" height="9" viewBox="0 0 11 9"><path d="M5.500 8 10 .8H1z" fill="#888" stroke="#888" stroke-linejoin="round"/></svg></div>
  </section>
  <div class="hscroll"><svg width="9" height="11" viewBox="0 0 9 11"><path d="M1 5.500 8.200 1v9z" fill="#888" stroke="#888" stroke-linejoin="round"/></svg><i></i><svg class="rt" width="9" height="11" viewBox="0 0 9 11"><path d="M8 5.500.8 1v9z" fill="#888" stroke="#888" stroke-linejoin="round"/></svg></div>

  <footer class="sheets">
    <svg class="s1" width="8" height="12" viewBox="0 0 8 12"><path d="M7 .7 1.200 6 7 11.300" fill="none" stroke="#bbb" stroke-width="1.400"/></svg>
    <svg class="s2" width="8" height="12" viewBox="0 0 8 12"><path d="M1 .7 6.800 6 1 11.300" fill="none" stroke="#bbb" stroke-width="1.400"/></svg>
    <svg class="s3" width="16" height="12" viewBox="0 0 16 12"><path d="M0 1h16M0 6h16M0 11h16" stroke="#555" stroke-width="1.300"/></svg>
    <span class="st on">HDSE 24.2</span><span class="st st2">Status</span><span class="st st3">Sheet1</span>
    <svg class="s4" width="14" height="14" viewBox="0 0 14 14"><path d="M7 0v14M0 7h14" stroke="#c4c4c4" stroke-width="1.500"/></svg>
  </footer>
  <footer class="status"><span>Workbook Statistics</span><svg class="stc" width="9" height="9" viewBox="0 0 14 14"><path d="M2 4l5 5.500L12 4" fill="none" stroke="#555" stroke-width="3"/></svg><span class="fbk">Give Feedback to Microsoft</span><svg class="mn" width="14" height="14" viewBox="0 0 14 14"><path d="M0 6.500h14" stroke="#444" stroke-width="1.200"/></svg><span class="pct">100%</span><svg class="pl" width="14" height="14" viewBox="0 0 14 14"><path d="M0 6.500h14M7 0v14" stroke="#444" stroke-width="1.200"/></svg></footer>

  <footer class="taskbar">
    <div class="apps-row">
      <span class="app"><svg width="30" height="30" viewBox="0 0 30 30"><path d="M1 0h13.300v14.300H0V1c0-.6.400-1 1-1ZM15.500 0H29c.6 0 1 .4 1 1v13.300H15.500zM0 15.500h14.300V30H1c-.6 0-1-.4-1-1zM15.500 15.500H30V29c0 .6-.4 1-1 1H15.500z" fill="url(#gWin)"/></svg></span>
      <span class="app"><svg width="30" height="30" viewBox="0 0 30 30"><rect x="7" y="1" width="23" height="20" rx="1.500" fill="url(#gTaskA)"/><rect x="0" y="9" width="23" height="19" rx="1.500" fill="url(#gTaskB)"/><path d="M7 9h14.500c.8 0 1.500.7 1.500 1.500V21H7z" fill="#a9a9a9"/></svg></span>
      <span class="app"><svg width="30" height="30" viewBox="0 0 30 30"><ellipse cx="15" cy="24.500" rx="12.500" ry="3.800" fill="none" stroke="#27308c" stroke-width="2.500"/><path d="M9 24 12 8l6 14 3-15" fill="none" stroke="#2a49a6" stroke-width="3.600"/><circle cx="13" cy="2.500" r="1.600" fill="#ccc"/><path d="M8 3l5 3 5-3M13 5v4" stroke="#555" stroke-width="1.500" fill="none"/></svg></span>
      <span class="app chrome run"><svg width="38" height="38" viewBox="0 0 38 38"><circle cx="17" cy="21" r="15" fill="#34a853"/><path d="M17 6a15 15 0 0 1 13 7.500H17L10.500 25 4 13.500A15 15 0 0 1 17 6Z" fill="#ea4335"/><path d="M30 13.500A15 15 0 0 1 17 36l6.500-11.300L23.500 13.500z" fill="#fbbc04"/><circle cx="17" cy="21" r="8" fill="#fff"/><circle cx="17" cy="21" r="6.200" fill="#1a73e8"/><use href="#avatar" x="18" y="0" width="20" height="20"/></svg></span>
      <span class="app run"><svg width="30" height="30" viewBox="0 0 30 30"><path d="M0 4c0-1.500 1-2.500 2.500-2.500h7L13 5v4H0z" fill="#dc9a0a"/><path d="M0 7.500h10L13.500 4h14C29 4 30 5 30 6.500V27c0 .8-.7 1.500-1.500 1.500h-27C.7 28.500 0 27.800 0 27z" fill="url(#gFold)"/><path d="M5 28.500V23c0-1.700 1.300-3 3-3h14c1.700 0 3 1.300 3 3v5.500z" fill="#0f7bd0"/><path d="M9 24h12" stroke="#0a4a85" stroke-width="1.300"/></svg></span>
      <span class="app gptapp"><svg width="30" height="30" viewBox="0 0 30 30"><rect width="30" height="30" fill="#fff"/><use href="#gpt" x="4" y="4" width="22" height="22"/></svg></span>
      <span class="app run"><svg width="30" height="30" viewBox="0 0 30 30"><path d="M1 10l3-2.500L22 22v8L1.500 12z" fill="#0d6bb5"/><path d="M1 20l3 2.500L22 8V0L1.500 18z" fill="#1289d8"/><path d="M22 0l8 3.500v23L22 30z" fill="#2fa8f3"/></svg></span>
      <span class="app"><svg width="29" height="29"><use href="#copilot"/></svg></span>
      <span class="app"><svg width="30" height="30" viewBox="0 0 30 30"><path d="M5 5v18c0 5 18 5 18 0V5z" fill="#b4c4e2"/><path d="M5 11c0 4 18 4 18 0M5 17c0 4 18 4 18 0" fill="none" stroke="#8ba1cc" stroke-width="1.200"/><path d="M5 5v18c0 2 3 3.300 5 3.600V7z" fill="#dde6f6"/><ellipse cx="14" cy="5" rx="9" ry="3.500" fill="#d3def2"/><circle cx="22.500" cy="22" r="6" fill="#4eb32a"/><path d="M20.500 18.800v6.400l5-3.200z" fill="#fff"/></svg></span>
      <span class="app run"><svg width="30" height="30" viewBox="0 0 30 30"><path d="M0 6l8-6h17L0 18z" fill="#7b4df0"/><path d="M0 13l12-5v22H2c-1.500 0-2-1-2-2z" fill="#1e7dfa"/><path d="M14 0h14.500L30 1.500V14l-6 6z" fill="url(#gIj)"/><path d="M30 12v8L20 30H8l14-12z" fill="#0f6ff0"/><rect x="6" y="5.500" width="18.500" height="19" fill="#000"/><path d="M8.500 8.500h4M10.500 8.500v6M8.500 14.500h4M15 8.500h3.500v4.300c0 1.700-1.800 2-3.300 1.300M8.500 21h7" fill="none" stroke="#fff" stroke-width="1.500"/></svg></span>
      <span class="app"><svg width="30" height="24" viewBox="0 0 30 24"><rect width="30" height="24" rx="1.500" fill="#404040"/><path d="M1.500 0H10v4H0V1.500C0 .7.700 0 1.500 0Z" fill="#cfcfcf"/><path d="M10 0h10v4H10z" fill="#9c9c9c"/><path d="M20 0h8.500c.8 0 1.500.7 1.500 1.500V4H20z" fill="#7a7a7a"/><path d="M4 8l5 5-5 5" fill="none" stroke="#fff" stroke-width="2.200"/><path d="M12 18.500h9" stroke="#ddd" stroke-width="2"/></svg></span>
      <span class="app"><svg width="30" height="30" viewBox="0 0 30 30"><path d="M0 8l4-2 18 16v8L4 17v6.500L0 22z" fill="#7d4bc0"/><path d="M0 22l4 2L22 8V0L4 14z" fill="#a473e2"/><path d="M22 0l8 3.500v23L22 30z" fill="url(#gVs)"/></svg></span>
      <span class="app sticky run"><svg width="27" height="27" viewBox="0 0 27 27"><path d="M1.500 0h24c.8 0 1.500.7 1.500 1.500V14L14 27H1.500C.7 27 0 26.300 0 25.500v-24C0 .7.700 0 1.500 0Z" fill="#ffd500"/><path d="M14 14h13L14 27z" fill="#404040"/><path d="M15.500 26 27 14v1.500L17 26.500z" fill="#e3b400"/></svg></span>
      <span class="app run"><svg width="30" height="30" viewBox="0 0 30 30"><path d="M2 28l2-7A13.500 13.500 0 1 1 9 26.200z" fill="none" stroke="#25d366" stroke-width="2.800"/><path d="M9 8.500c.8-1.200 2.400-1 2.900.2l1 2.300c.3.800-.8 1.700-1.200 2.300 1.200 2.200 2.800 3.500 5 4.500.7-.6 1.300-1.800 2.200-1.500l2.500 1.300c1 .6.500 2.300-.3 3.100-2 1.900-4.700 1.100-7-.1-2.500-1.400-4.500-3.500-5.800-6.200-.8-2-.8-4.300.7-5.900Z" fill="#25d366"/></svg></span>
    </div>
    <div class="tray">
      <svg class="y1" width="14" height="8" viewBox="0 0 14 8"><path d="M1 7l6-6 6 6" fill="none" stroke="#fff" stroke-width="1.600"/></svg>
      <svg class="y2" width="20" height="17" viewBox="0 0 20 17"><g fill="none" stroke="#fff" stroke-width="1.400"><rect x="1" y="1" width="18" height="15" rx="2.500"/><path d="M1 10.500h18M10 10.500V16"/></g></svg>
      <span class="lang">ENG<br>UK</span>
      <svg class="y3" width="20" height="16" viewBox="0 0 20 16"><g fill="none" stroke="#fff" stroke-width="1.500"><path d="M1 6c5-5.500 13-5.500 18 0" stroke="#555"/><path d="M3.800 8.700c3.700-4 8.700-4 12.400 0M6.500 11.400c2.200-2.300 4.800-2.300 7 0"/></g><circle cx="10" cy="13.500" r="2" fill="#fff"/></svg>
      <svg class="y4" width="21" height="18" viewBox="0 0 21 18"><g fill="none" stroke="#fff" stroke-width="1.300"><path d="M1 6.500h3L9 2v14l-5-4.500H1zM11.500 6c1.700 1.800 1.700 4.200 0 6M14 3.500c3 3.300 3 7.700 0 11M16.500 1.200c4.400 4.600 4.400 11 0 15.600"/></g></svg>
      <svg class="y5" width="20" height="14" viewBox="0 0 20 14"><rect x=".8" y="1" width="16" height="12" rx="3" fill="none" stroke="#fff" stroke-width="1.400"/><rect x="3" y="3.200" width="5.500" height="7.600" rx="1" fill="#fff"/><path d="M18.500 4.500v5" stroke="#fff" stroke-width="2"/></svg>
      <span class="clock">5:44 AM<br>3/20/2025</span>
      <svg class="y6" width="18" height="20" viewBox="0 0 18 20"><path d="M2 8.500c0-4 2.500-6.500 6-6.500s6 2.500 6 6.500v4l1.500 3.500H.5L2 12.500zM5.500 17.200h5c-.5 2.300-4.500 2.300-5 0z" fill="#fff"/><path d="M5.500 7.500H10L5.500 13H10" fill="none" stroke="#222" stroke-width="1.300"/><path d="M12 1.200h4.500L12 6.500h4.500" fill="none" stroke="#222" stroke-width="3.500"/><path d="M12 1.200h4.500L12 6.500h4.500" fill="none" stroke="#fff" stroke-width="1.400"/></svg>
    </div>
  </footer>
</div>
</body>
</html>
```
FILE: styles.css
```css
*,*::before,*::after{box-sizing:border-box}
html,body{margin:0;width:1920px;height:1080px;overflow:hidden}
body{font-family:"Open Sans","Noto Sans",sans-serif;background:#f5f5f5;color:#333}
svg{display:block;flex:none}
.defs{position:absolute}
i,em{font-style:normal}
.screen{width:1920px;height:1080px;display:flex;flex-direction:column;overflow:hidden;background:#f5f5f5}
.screen>*{flex:none}

/* browser tab strip; runs on behind the rounded toolbar corners */
.tabstrip{height:60px;margin-bottom:-10px;background:#1f2120;display:flex;align-items:center;padding:0 0 10px 8px}
.tabsearch{width:35px;height:34px;border-radius:10px;background:#3c3c3c;display:flex;align-items:center;justify-content:center}
.tab{display:flex;align-items:center;color:#d2d2d2;font-size:14.150px;white-space:nowrap}
.tabtitle{margin-left:10px;width:196px}
.tab-idle{width:305px;padding-left:17px}
.tab-idle .tabx{margin-left:28px}
.tab-active{width:290px;height:43px;align-self:flex-end;padding:0 0 5px 9px;background:#3c3c3c;border-radius:11px 11px 0 0;position:relative}
.tab-active::before,.tab-active::after{content:"";position:absolute;bottom:0;width:12px;height:12px}
.tab-active::before{left:-12px;background:radial-gradient(circle at 0 0,transparent 11.500px,#3c3c3c 12px)}
.tab-active::after{right:-12px;background:radial-gradient(circle at 100% 0,transparent 11.500px,#3c3c3c 12px)}
.tabtitle.sel{width:202px;color:#eee;font-size:14.360px}
.tab-active .tabx{margin-left:22px}
.tabx{color:#ddd}
.newtab{margin-left:18px}
.winctl{margin-left:auto;display:flex;gap:43px;padding-right:22px}

/* address row */
.toolbar{height:50px;background:#3c3c3c;display:flex;align-items:flex-end;border-radius:9px 9px 0 0}
.nav{margin:0 0 14px 20px;color:#d8d8d8}
.nav+.nav{margin-left:28px}
.nav+.nav.dim{margin-left:29px}
.dim{color:#777}
.omnibox{margin-left:25px;width:1597px;height:42px;border-radius:21px;background:#282828;display:flex;align-items:center;padding-left:6px}
.siteinfo{width:30px;height:30px;border-radius:15px;background:#3c3c3c;display:flex;align-items:center;justify-content:center}
.url{margin-left:10px;width:1501px;font-size:16.800px;color:#c7c7c7;white-space:nowrap;line-height:42px;letter-spacing:.042px;padding-top:1px}
.url b{font-weight:400;color:#fff;letter-spacing:-.24px}
.star{margin-left:10px}
.ext{margin:0 0 10px 23px}
.vbar{width:2px;height:20px;background:#606060;border-radius:1px}
.toolbar .vbar{margin:0 0 11px 20px}
.ava{margin:0 0 9px 21px}
.dots{margin:0 0 12px 30px}

/* bookmarks row */
.bookmarks{height:51px;background:#3c3c3c;display:flex;align-items:center;border-bottom:1px solid #4a4a4a;padding-bottom:1px;font-size:14.2px;color:#d0d0d0;white-space:nowrap}
.apps{margin:1px 0 0 23px}
.bookmarks .vbar{margin-left:19px}
.bm{display:flex;align-items:center;gap:8px}
.gpt,.gptapp{color:#111}
.bm1{margin-left:18px;width:186px;font-size:14.450px}
.bm2{width:135px}
.bm3{width:193px}
.bm4{width:40px}
.bm5{width:92px;gap:7px}
.bm6{width:40px}
.bm7{width:192px}
.bm8{width:191px;gap:7px;font-size:14.050px}
.bm9{width:184px;gap:7px}
.bm10{width:300px;gap:7px}
.more{margin-left:89px}
.bookmarks .vb2{margin-left:22px}
.bmall{margin-left:18px;gap:9px}

/* app title bar */
.titlebar{height:58px;display:flex;align-items:center;font-size:16.950px;color:#222}
.waffle{margin:1px 0 0 20px}
.xl{margin:1px 0 0 37px}
.docname{margin:2px 0 0 31px;width:205px;white-space:nowrap}
.shield{margin:3px 0 0 11px}
.ned{margin-left:14px;color:#333}
.tchev{margin-left:9px;color:#666}
.search{margin-left:213px;width:586px;height:41px;border-radius:5px;background:#fafafa;border:1px solid #e2e2e2;box-shadow:0 1px 2px rgba(0,0,0,.18);display:flex;align-items:center;font-size:16.780px;color:#707070;padding-left:21px;gap:15px;margin-top:2px;white-space:nowrap}
.gear{margin:1px 0 0 598px}
.me{width:40px;height:40px;border:1.500px solid #333;border-radius:20px;margin-left:30px;margin-top:1px;display:flex;align-items:center;justify-content:center;font-size:15px}

/* menu row */
.menubar{height:47px;display:flex;align-items:center;font-size:16.500px;color:#333;white-space:nowrap}
.mi{height:40px;line-height:41px;margin-top:-3px}
.m1{margin-left:26px;width:51px}
.m2{width:77px}
.m3{width:72px}
.m4{width:73px}
.m5{width:124px}
.m6{width:100px}
.m7{width:65px}
.m8{width:83px}
.m9{width:66px}
.m10{width:106px}
.m11{width:65px}
.m6{letter-spacing:-.15px}
.m2.on{width:48px;height:38px;margin-top:-5px;margin-right:29px;font-weight:600;color:#222;border-bottom:3px solid #107c41}
.actions{margin-left:auto;display:flex;gap:10px;padding-right:10px;margin-top:-3px;color:#222;font-size:14px}
.btn{height:30px;border:1px solid #d1d1d1;border-radius:5px;background:#fff;display:flex;align-items:center;padding-left:11px;gap:6px}
.b1{width:118px}.b2{width:106px;gap:7px}.b3{width:120px}.b4{width:104px;background:#107c41;border-color:#107c41;color:#fff}
.b4 .bc{margin-left:-2px}

/* ribbon */
.ribbon{height:50px;border-radius:9px;background:#fff;box-shadow:0 1px 3px rgba(0,0,0,.25);display:flex;align-items:center;padding-left:14px;margin:0 10px}
.t{width:32px;height:32px;margin-left:7px;flex:none}
.t0{margin-left:0}
.t8{margin-left:8px}.t6{margin-left:6px}
.c{width:14px;height:14px;margin:0 2px;flex:none;color:#a8a8a8}
.g{color:#aaa}
.k{color:#222}
.dv{width:1px;height:30px;background:#c8c8c8;margin-left:9px;flex:none}
.dv+.t{margin-left:9px}
.d7{margin-left:7px}.d8{margin-left:8px}
.dv+.t8b{margin-left:8px}
.combo{height:35px;border:1px solid #ececec;border-radius:4px;display:flex;align-items:center;justify-content:flex-end;color:#a6a6a6;font-size:15.800px;flex:none}
.combo em{flex:1;padding:1px 0 0 11px}
.font{width:160px;margin-left:5px;border-radius:4px 0 0 4px}
.size{width:65px;margin-left:-1px;border-radius:0 4px 4px 0}
.num{width:160px;margin-left:5px}
.num+.t{margin-left:14px}
.bold{margin-left:15px;font:600 21px/32px "Open Sans",sans-serif;color:#a3a3a3;text-align:center}
.cur{font-size:16px;line-height:32px;text-align:center;color:#a3a3a3}
.dec{position:relative;font-size:16px;line-height:28px;color:#a3a3a3;padding-left:4px;letter-spacing:-.5px}
.dec svg{position:absolute;right:5px;top:18px}
.rc{margin-left:auto;margin-right:11px;margin-top:16px}

/* formula bar */
.formula{height:40px;display:flex;align-items:center;padding:0 10px;gap:10px}
.fb{height:30px;border:1px solid #d0d0d0;border-radius:5px;display:flex;align-items:center;font-size:16.400px;color:#c0c0c0}
.name{width:155px;padding:1px 0 0 5px;justify-content:space-between}
.fx{width:108px;padding-left:10px;gap:16px;color:#aaa}
.fx em{font:italic 19px/20px "Liberation Serif",serif;margin-left:-4px;white-space:nowrap}
.fx sub{font-size:15px;vertical-align:-3px}
.fx .sc{margin-left:-10px}
.input{flex:1;justify-content:flex-end;padding-right:8px}

/* sheet */
.work{height:591px;display:flex}
.grid{width:1905px;height:591px;overflow:hidden}
.colhead{width:2000px;height:38px;border-bottom:1px solid #b4b4b4;display:flex;font-size:15.500px;color:#555;align-items:flex-end}
.colhead span{flex:none;height:24px;line-height:25px;border-right:1px solid #dcdcdc;text-align:center}
.corner{width:54px;height:38px;margin-bottom:-1px;flex:none;border-right:3px solid #b8b8b8;border-bottom:3px solid #b8b8b8;display:flex;align-items:flex-end;justify-content:flex-end;padding:0 2px 2px 0}
.colhead .hsel{background:#c9ead7;color:#107c41;border-right-color:#8fd0ac;border-bottom:2px solid #107c41;margin-bottom:-1px;height:25px}
.wa{width:314px}.wb{width:619px}.wc{width:638px}.wbc{width:1257px}.wd{width:80px}.wg{width:81px}
.row{display:flex;width:2000px}
.row i{flex:none;border-right:1px solid #000;border-bottom:1px solid #000;background-color:#fff;color:#000;display:flex;align-items:flex-end;white-space:pre;overflow:hidden}
.row .e{border-color:#e0e0e0}
.row .rh{width:54px;margin:-1px 0 1px;background:#f5f5f5;border-right:1px solid #bdbdbd;border-bottom:1px solid #dedede;color:#666;font-size:15.700px;align-items:center;justify-content:flex-end;padding:2px 6px 0 0;line-height:20px}
.row .wa{justify-content:flex-end;padding:0 3px 3px 0;font:400 20px/20px "Liberation Serif",serif;-webkit-text-stroke:.8px #000}
.row .low{padding-bottom:2px}
.h2{height:2px}.h2 .wa,.h2 .rh{padding:0 !important}
.row .sliver{background:#93e2e5;border-bottom-color:#d86dcd}
.h25{height:25px}.h26{height:26px}.h27{height:27px}.h31{height:31px}.h32{height:32px}
.row .pink{background:#d86dcd}
.row .red{background:#f00}
.row .peach{background:#f1a983}
.row .gold{background:#ffc000}
.row .orange{background:#f77e05}
.row .cyan{background:#93e2e5}
.row .purple{background:#7030a0}
.row .green{background:#84e291}
.row .exam{background:#000;color:#f00}
.row .nb{border-bottom:0}
.row .nr{border-right-color:#7030a0}
.row .lato{font:bold 20.920px/22px Lato,sans-serif;padding:0 0 6px 3px}
.row .lato.nb{padding-bottom:7px}
.row .long{font-size:21.100px;letter-spacing:.03px}
.row .small{font:bold 15.850px/20px Roboto,sans-serif;padding:0 0 0 2px}
.row .large{font:400 17.780px/20px Roboto,sans-serif;padding:0 0 1px 2px;-webkit-text-stroke:.7px #000}
.row .plain{font:400 17.750px/20px Roboto,sans-serif;padding:0 0 1px 3px}
.h27 .plain{padding-bottom:2px}
.row .mid{justify-content:center;padding-left:0}
.row .up{padding-bottom:1px}
.row .exam{padding-bottom:0;font-size:16.020px}
.row .active{overflow:visible;position:relative}
.active::after{content:"";position:absolute;left:-2px;top:-3px;width:82px;height:28px;border:2px solid #107c41}
.row .rsel{background:#c9ead7;color:#107c41;border-right:2px solid #107c41;border-bottom-color:#8fd0ac;padding-right:5px}
.vscroll{width:15px;background:#e6e6e6;display:flex;flex-direction:column;padding:6px 0 0 2px}
.vscroll i{width:9px;height:56px;border-radius:5px;background:#888;margin:186px 0 0 1px}
.vscroll .dn{margin-top:319px}
.hscroll{height:15px;background:#e6e6e6;display:flex;align-items:center;padding-left:6px}
.hscroll i{width:931px;height:9px;border-radius:5px;background:#888;margin-left:9px}
.hscroll .rt{margin-left:935px}

/* sheet tabs, status */
.sheets{height:41px;border-bottom:1px solid #dcdcdc;display:flex;align-items:center;font-size:16.250px;color:#444;padding-left:16px}
.s2{margin-left:33px}
.s3{margin-left:27px}
.st{height:40px;line-height:38px;white-space:nowrap}
.st.on{margin-left:23px;width:83px;font-weight:600;font-size:16.950px;border-bottom:3px solid #107c41;color:#333}
.st2{margin-left:23px;width:47px}
.st3{margin-left:23px;width:52px}
.s4{margin-left:25px}
.status{height:27px;background:#fff;display:flex;align-items:center;font-size:14.300px;color:#444;padding:1px 0 0 39px;white-space:nowrap}
.stc{margin-left:1354px;margin-top:3px}
.status span:first-child{width:130px}
.fbk{margin-left:51px;width:181px;font-size:14.400px}
.mn{margin-left:47px}
.pct{margin-left:16px;width:37px}
.pl{margin-left:13px}

/* taskbar */
.taskbar{height:60px;background:#222;border-top:1px solid #3a3a3a;padding-bottom:1px;display:flex;align-items:center}
.apps-row{display:flex;margin-left:577.500px;gap:5.120px}
.app{width:50px;height:50px;border-radius:6px;display:flex;align-items:center;justify-content:center;position:relative;flex:none}
.run::after{content:"";position:absolute;left:21px;bottom:1px;width:8px;height:4px;border-radius:2px;background:#9a9a9a}
.chrome{background:#343434;border:1px solid #3f3f3f}
.chrome svg{margin:-10px 0 0 6px}
.chrome.run::after{left:14px;width:20px;background:#4cc2ff;bottom:0}
.sticky{background:#7f444a;box-shadow:inset -4px 0 0 -1px #4f2a2e,inset -5px 0 #8d4c53}
.sticky.run::after{background:#ff99a4}
.tray{margin-left:auto;display:flex;align-items:center;color:#fff;font-size:14.300px;line-height:20px}
.y2{margin-left:23px}
.lang{margin-left:23px;width:32px;text-align:center}
.y3{margin-left:21px}
.y4{margin-left:10px}
.y5{margin-left:10px}
.clock{margin-left:16px;width:72px;text-align:right;white-space:nowrap}
.y6{margin:0 26px 0 11px}
```
